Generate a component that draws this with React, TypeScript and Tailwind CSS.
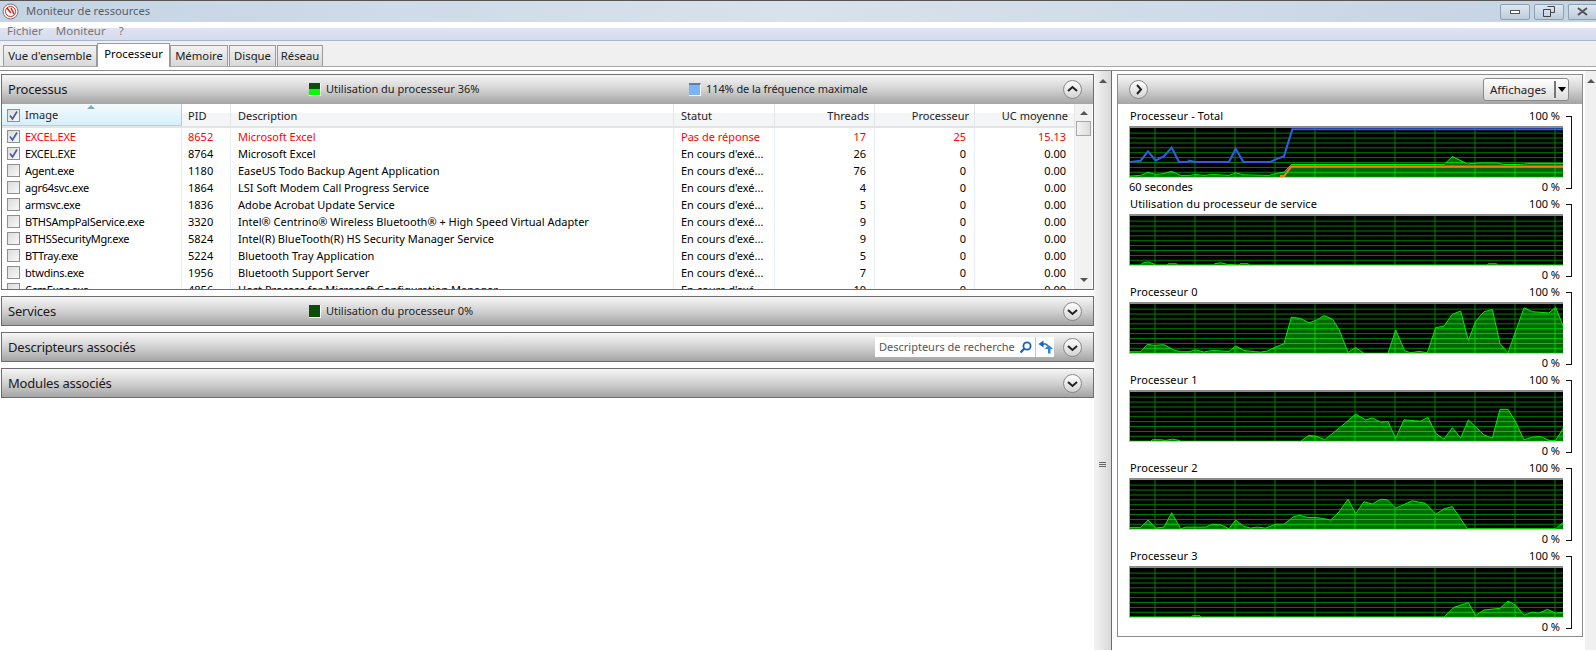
import { useId } from "react";

const FONT = "font-['Noto_Sans','Open_Sans',sans-serif]";
const GRID_COLS = "grid grid-cols-[180px_49px_443px_101px_100px_100px_100px]";

const rows = [
  ["EXCEL.EXE", "8652", "Microsoft Excel", "Pas de réponse", "17", "25", "15.13"],
  ["EXCEL.EXE", "8764", "Microsoft Excel", "En cours d'exé...", "26", "0", "0.00"],
  ["Agent.exe", "1180", "EaseUS Todo Backup Agent Application", "En cours d'exé...", "76", "0", "0.00"],
  ["agr64svc.exe", "1864", "LSI Soft Modem Call Progress Service", "En cours d'exé...", "4", "0", "0.00"],
  ["armsvc.exe", "1836", "Adobe Acrobat Update Service", "En cours d'exé...", "5", "0", "0.00"],
  ["BTHSAmpPalService.exe", "3320", "Intel® Centrino® Wireless Bluetooth® + High Speed Virtual Adapter", "En cours d'exé...", "9", "0", "0.00"],
  ["BTHSSecurityMgr.exe", "5824", "Intel(R) BlueTooth(R) HS Security Manager Service", "En cours d'exé...", "9", "0", "0.00"],
  ["BTTray.exe", "5224", "Bluetooth Tray Application", "En cours d'exé...", "5", "0", "0.00"],
  ["btwdins.exe", "1956", "Bluetooth Support Server", "En cours d'exé...", "7", "0", "0.00"],
  ["CcmExec.exe", "4856", "Host Process for Microsoft Configuration Manager", "En cours d'exé...", "10", "0", "0.00"],
];

// points are read off the 3x crops: x from 88 to 1390, y from the chart top
const serviceLine = "88,196 120,196 125,190 143,186 162,194 165,196 200,196 203,192 228,192 230,196 338,196 342,192 360,189 380,194 415,196 418,192 443,192 445,196 1160,196 1163,192 1188,192 1190,196 1390,196";
const cpu0 = "88,455 120,455 140,432 160,435 190,433 220,450 240,455 265,455 285,449 310,456 335,451 385,454 405,437 430,451 465,455 480,456 500,453 525,440 550,430 572,347 600,351 625,365 650,355 670,342 695,353 715,385 742,457 765,442 790,460 862,460 885,387 912,452 930,458 955,454 980,458 1005,380 1030,375 1055,338 1080,328 1103,420 1125,360 1150,330 1175,323 1198,430 1222,458 1270,318 1295,330 1345,334 1365,316 1390,382";
const cpu1 = "88,725 150,725 155,720 180,720 195,722 215,718 235,722 240,725 600,725 625,706 650,710 672,720 720,680 765,640 795,658 815,652 840,665 862,663 885,715 910,658 945,661 960,662 982,650 1005,700 1030,718 1055,682 1080,715 1103,658 1150,705 1175,715 1198,625 1222,625 1245,665 1270,720 1295,712 1320,710 1345,722 1365,722 1390,680";
const cpu2 = "88,293 120,293 142,270 165,295 190,292 213,247 240,297 255,292 315,292 335,283 360,285 385,297 405,270 430,290 450,295 470,292 495,295 525,283 550,283 578,260 598,255 620,262 650,262 690,270 715,245 742,205 765,250 790,213 815,220 840,205 860,207 885,233 935,210 975,218 1005,252 1030,235 1055,228 1100,297 1365,297 1390,275";
const cpu3 = "88,562 272,562 275,558 298,558 300,562 1030,562 1060,532 1103,517 1125,557 1150,540 1198,535 1222,512 1245,525 1270,556 1295,547 1315,550 1340,538 1365,550 1390,547";
const totalLine = "88,530 120,528 142,518 165,525 190,522 213,515 240,528 265,528 285,525 310,528 335,525 385,528 405,520 430,526 505,528 525,522 550,518 572,494 1030,494 1055,469 1100,492 1140,489 1190,489 1210,494 1260,494 1280,491 1390,491";
const totalOrange = "538,530 550,530 572,500 1390,500";
const totalBlue = "88,486 120,482 142,453 165,481 190,468 213,441 235,486 262,486 265,482 285,486 385,486 405,445 428,486 510,486 525,478 550,468 575,384 1390,384";

const charts = [
  { title: "Processeur - Total", top: 380, line: totalLine, footer: "60 secondes", total: true },
  { title: "Utilisation du processeur de service", top: 43, line: serviceLine },
  { title: "Processeur 0", top: 306, line: cpu0 },
  { title: "Processeur 1", top: 571, line: cpu1 },
  { title: "Processeur 2", top: 145, line: cpu2 },
  { title: "Processeur 3", top: 409, line: cpu3 },
];

function Graph({ top, line, total }: { top: number; line: string; total?: boolean }) {
  const clip = useId();
  const bottom = top + 153;
  const area = `88,${bottom} ${line} 1390,${bottom}`;
  const vs = Array.from({ length: 11 }, (_, i) => 163 + i * 120);
  const hs = Array.from({ length: 10 }, (_, i) => top + 16 + i * 15.3);
  const gridLines = (color: string) => (
    <g stroke={color} strokeWidth={3} shapeRendering="crispEdges">
      {vs.map((x) => (
        <line key={x} x1={x} x2={x} y1={top} y2={bottom} />
      ))}
      {hs.map((y) => (
        <line key={y} x1={87} x2={1392} y1={y} y2={y} />
      ))}
    </g>
  );
  return (
    <div className="h-[52px] w-[434px] border-t-2 border-b border-l border-t-[#8c8c8c] border-b-[#c8c8c8] border-l-[#a8a8a8] bg-black">
      <svg width={433} height={49} viewBox={`88 ${top} 1299 ${bottom - top}`} preserveAspectRatio="none" className="block">
        <defs>
          <clipPath id={clip}>
            <polygon points={area} />
          </clipPath>
        </defs>
        {gridLines("#008200")}
        <polygon points={area} fill="#006a00" />
        <g clipPath={`url(#${clip})`}>{gridLines("#00d000")}</g>
        <polyline points={line} fill="none" stroke="#00f000" strokeWidth={3} />
        {total && <polyline points={totalOrange} fill="none" stroke="#f57c10" strokeWidth={6.4} />}
        {total && <polyline points={totalBlue} fill="none" stroke="#2f5be6" strokeWidth={6.4} />}
      </svg>
    </div>
  );
}

function Box({ checked }: { checked?: boolean }) {
  return (
    <span className="flex h-[13px] w-[13px] shrink-0 items-center justify-center border border-[#8e8f8f] bg-gradient-to-br from-[#dcdcdc] to-[#f8f8f8]">
      {checked && (
        <svg width="11" height="11" viewBox="0 0 11 11">
          <path d="M2 5.5 L4.5 9 L9 1.5" fill="none" stroke="#4a5f97" strokeWidth="1.7" />
        </svg>
      )}
    </span>
  );
}

function RoundButton({ dir }: { dir: "up" | "down" | "right" }) {
  const d = dir === "up" ? "M4 10 L8.5 6 L13 10" : dir === "down" ? "M4 7 L8.5 11 L13 7" : "M7 4 L11 8.5 L7 13";
  return (
    <span className="flex h-[19px] w-[19px] items-center justify-center rounded-full border border-[#8a8a8a] bg-gradient-to-b from-white to-[#d4d4d4]">
      <svg width="17" height="17" viewBox="0 0 17 17">
        <path d={d} fill="none" stroke="#222" strokeWidth="2" />
      </svg>
    </span>
  );
}

function Meter({ color, fill }: { color: string; fill: number }) {
  return (
    <span className="flex h-[13px] w-[12px] flex-col justify-end border-r border-b border-white bg-[#0b4d0b]">
      <span className={`w-full ${color}`} style={{ height: fill }} />
    </span>
  );
}

function PanelHeader({ title, children, dir }: { title: string; children?: React.ReactNode; dir: "up" | "down" }) {
  const collapsed = dir === "down";
  return (
    <div className={`flex ${collapsed ? "h-[28px]" : "h-[29px]"} items-center bg-gradient-to-b from-[#f6f6f6] via-[#d2d2d2] to-[#a4a4a4] pr-[11px] pl-[6px]`}>
      <span className={`w-[301px] text-[13px] tracking-[-0.2px] text-[#1a1a1a] ${collapsed ? "pt-[2px]" : ""}`}>{title}</span>
      <div className="flex flex-1 items-center">{children}</div>
      <RoundButton dir={dir} />
    </div>
  );
}

function ArrowUp() {
  return <span className="h-0 w-0 border-x-[4px] border-b-[4px] border-x-transparent border-b-[#555]" />;
}

function ArrowDown() {
  return <span className="h-0 w-0 border-x-[4px] border-t-[4px] border-x-transparent border-t-[#555]" />;
}

const headerCell = "flex items-center border-r border-[#e4e6e8] px-[6px] pt-[2px] text-[#222]";

function ProcessTable() {
  return (
    <div className="flex h-[185px]">
      <div className="h-full w-[1073px] overflow-hidden">
        <div className={`${GRID_COLS} h-[24px] border-b-2 border-[#e2e4e6] bg-gradient-to-b from-white from-40% to-[#f3f5f7] to-40%`}>
          <div className="relative flex items-center gap-[5px] border-r border-b border-[#9fd5ef] bg-gradient-to-b from-[#f4fbfe] to-[#d7effa] pt-[2px] pl-[5px]">
            <Box checked />
            <span className="text-[#222]">Image</span>
            <span className="absolute top-[1px] left-[85px] h-0 w-0 border-x-[4px] border-b-[4px] border-x-transparent border-b-[#7fa8c0]" />
          </div>
          <div className={headerCell}>PID</div>
          <div className={`${headerCell} pl-[7px]`}>Description</div>
          <div className={`${headerCell} pl-[7px]`}>Statut</div>
          <div className={`${headerCell} justify-end pr-[5px]`}>Threads</div>
          <div className={`${headerCell} justify-end pr-[5px]`}>Processeur</div>
          <div className={`${headerCell} justify-end`}>UC moyenne</div>
        </div>
        {rows.map((r, i) => (
          <div key={i} className={`${GRID_COLS} h-[17px] leading-[17px] ${i === 0 ? "text-[#ff0000]" : "text-black"}`}>
            <div className="flex items-center gap-[5px] border-r border-[#e6eefa] pl-[5px]">
              <Box checked={i < 2} />
              <span className="tracking-[-0.25px]">{r[0]}</span>
            </div>
            <div className="border-r border-[#e6eefa] pl-[6px]">{r[1]}</div>
            <div className="overflow-hidden border-r border-[#e6eefa] pl-[7px] whitespace-nowrap">{r[2]}</div>
            <div className="border-r border-[#e6eefa] pl-[7px]">{r[3]}</div>
            <div className="border-r border-[#e6eefa] pr-[8px] text-right">{r[4]}</div>
            <div className="border-r border-[#e6eefa] pr-[8px] text-right">{r[5]}</div>
            <div className="border-r border-[#e6eefa] pr-[8px] text-right">{r[6]}</div>
          </div>
        ))}
      </div>
      <div className="flex w-[17px] flex-col items-center bg-[#f2f2f2] py-[7px]">
        <ArrowUp />
        <span className="mt-[6px] h-[15px] w-[15px] border border-[#a8a8a8] bg-gradient-to-r from-[#f4f4f4] to-[#dcdcdc]" />
        <span className="flex-1" />
        <ArrowDown />
      </div>
    </div>
  );
}

function LeftColumn() {
  return (
    <div className="flex w-[1094px] flex-col gap-[6px] pt-[3px] pl-[1px]">
      <div className="border border-[#6e6e6e]">
        <PanelHeader title="Processus" dir="up">
          <Meter color="bg-[#00ff00]" fill={6} />
          <span className="ml-[5px] w-[363px] text-[#222]">Utilisation du processeur 36%</span>
          <span className="h-[13px] w-[12px] border-t-2 border-r border-b border-white border-t-[#5b7fae] bg-[#7ab4fa]" />
          <span className="ml-[5px] tracking-[-0.1px] text-[#222]">114% de la fréquence maximale</span>
        </PanelHeader>
        <ProcessTable />
      </div>
      <div className="border border-[#6e6e6e]">
        <PanelHeader title="Services" dir="down">
          <Meter color="bg-[#00ff00]" fill={0} />
          <span className="ml-[5px] text-[#222]">Utilisation du processeur 0%</span>
        </PanelHeader>
      </div>
      <div className="border border-[#6e6e6e]">
        <PanelHeader title="Descripteurs associés" dir="down">
          <div className="mr-[9px] ml-auto flex h-[20px] w-[179px] items-center bg-white pl-[4px] text-[#555]">
            <span className="flex-1">Descripteurs de recherche</span>
            <svg width="13" height="13" viewBox="0 0 13 13" className="mr-[3px]">
              <circle cx="8" cy="5" r="3.6" fill="none" stroke="#1d5fb0" strokeWidth="1.8" />
              <path d="M5.2 7.8 L1.5 11.5" stroke="#1d5fb0" strokeWidth="2.2" />
            </svg>
            <span className="flex h-full w-[19px] items-center justify-center border-l border-[#b8c8d8]">
              <svg width="15" height="14" viewBox="0 0 15 14">
                <path d="M5.5 0.5 L0.5 4 L5.5 7.5 Z" fill="#1f5fb5" />
                <path d="M5 4 H7.5 Q9 4 9.5 6" fill="none" stroke="#1f5fb5" strokeWidth="1.6" />
                <path d="M10 13.5 V9 H6.5 L10.8 5 L15 9 H12.5 V13.5 Z" fill="#2f82dc" />
              </svg>
            </span>
          </div>
        </PanelHeader>
      </div>
      <div className="border border-[#6e6e6e]">
        <PanelHeader title="Modules associés" dir="down" />
      </div>
    </div>
  );
}

function Splitter() {
  return (
    <div className="flex w-[18px] flex-col items-center border-r border-[#6a6a6a] bg-gradient-to-r from-[#f4f4f4] to-[#d8d8d8] pt-[8px]">
      <ArrowUp />
      <span className="mt-[379px] flex flex-col gap-[1px]">
        <span className="h-px w-[7px] bg-[#666]" />
        <span className="h-px w-[7px] bg-[#666]" />
        <span className="h-px w-[7px] bg-[#666]" />
      </span>
    </div>
  );
}

function RightColumn() {
  return (
    <div className="ml-[5px] flex w-[466px] flex-col pt-[3px]">
      <div className="border border-[#8a8a8a] bg-white">
        <div className="flex h-[29px] items-center justify-between bg-gradient-to-b from-[#f6f6f6] via-[#d2d2d2] to-[#a4a4a4] pr-[13px] pl-[11px]">
          <RoundButton dir="right" />
          <div className="flex h-[23px] w-[86px] items-center rounded-[3px] border border-[#8a8a8a] bg-gradient-to-b from-white to-[#dcdcdc] pl-[6px] text-[11.5px] text-[#222]">
            <span className="flex-1">Affichages</span>
            <span className="flex h-[17px] w-[14px] items-center justify-center border-l-2 border-[#777]">
              <span className="h-0 w-0 border-x-[4px] border-t-[5px] border-x-transparent border-t-black" />
            </span>
          </div>
        </div>
        <div className="flex flex-col pt-[4px] pl-[11px]">
          {charts.map((c) => (
            <div key={c.title} className="flex h-[88px]">
              <div className="flex w-[434px] flex-col">
                <div className="flex h-[18px] items-center justify-between px-[1px] pb-[2px] text-black">
                  <span className="tracking-[0.1px]">{c.title}</span>
                  <span className="pr-[2px]">100 %</span>
                </div>
                <Graph top={c.top} line={c.line} total={c.total} />
                <div className="flex h-[18px] items-center justify-between pr-[3px] text-black">
                  <span>{c.footer}</span>
                  <span>0 %</span>
                </div>
              </div>
              <span className="mt-[8px] ml-[3px] h-[73px] w-[6px] border-y border-r border-[#111]" />
            </div>
          ))}
        </div>
      </div>
    </div>
  );
}

const captionButton = "flex h-[16px] items-center justify-center border border-[#8ea0b4] bg-gradient-to-b from-[#dfe8f1] to-[#bccbdb]";

function TitleBar() {
  return (
    <div className="flex h-[22px] items-center border-t border-[#555] bg-gradient-to-r from-[#c4d4e4] via-[#d8e2ec] to-[#c4d3e3] pl-[2px] text-[11.2px] text-[#5a5f66]">
      <svg width="17" height="17" viewBox="0 0 17 17">
        <circle cx="8.5" cy="8.5" r="7.5" fill="#eee" stroke="#777" />
        <circle cx="8.5" cy="8.5" r="5" fill="#fff" stroke="#b33" />
        <path d="M5 5 L9 10 M9 5 L12 11" stroke="#c22" strokeWidth="1.5" />
      </svg>
      <span className="ml-[7px]">Moniteur de ressources</span>
      <div className="ml-auto flex items-center gap-[4px]">
        <span className={`${captionButton} w-[30px] rounded-[2px]`}>
          <span className="h-[4px] w-[10px] border border-[#555] bg-white" />
        </span>
        <span className={`${captionButton} w-[30px] rounded-[2px]`}>
          <svg width="12" height="11" viewBox="0 0 12 11">
            <path d="M4.5 .5 H11.5 V6.5 H8 M.5 3.5 H7.5 V10.5 H.5 Z" fill="none" stroke="#444" />
          </svg>
        </span>
        <span className={`${captionButton} w-[28px] rounded-l-[2px] border-r-0`}>
          <svg width="11" height="9" viewBox="0 0 11 9">
            <path d="M1 1 L10 8 M10 1 L1 8" stroke="#555" strokeWidth="2" />
          </svg>
        </span>
      </div>
    </div>
  );
}

const tabs = [
  { label: "Vue d'ensemble", w: "w-[94px]" },
  { label: "Processeur", w: "w-[73px]", active: true },
  { label: "Mémoire", w: "w-[58px]" },
  { label: "Disque", w: "ml-[1px] w-[47px]" },
  { label: "Réseau", w: "ml-[1px] w-[46px]" },
];

export default function App() {
  return (
    <div className={`${FONT} h-[651px] w-[1596px] overflow-hidden bg-white text-[11px]`}>
      <TitleBar />
      <div className="flex h-[19px] items-center gap-[13px] border-b border-[#a9b5c9] bg-[linear-gradient(#ffffff_6px,#dfe3f2_6px,#d5dcee)] pl-[7px] text-[11.5px] text-[#777]">
        <span>Fichier</span>
        <span>Moniteur</span>
        <span>?</span>
      </div>
      <div className="flex h-[26px] items-end border-b border-[#a8a8a8] bg-[#f0f0f0] pl-[3px]">
        {tabs.map((t) =>
          t.active ? (
            <div key={t.label} className={`${t.w} -mb-px flex h-[24px] items-center justify-center border-x border-t border-[#9a9a9a] bg-white pb-[3px] text-[11.3px] text-black`}>
              {t.label}
            </div>
          ) : (
            <div key={t.label} className={`${t.w} flex h-[21px] items-center justify-center border-x border-t border-[#9a9a9a] bg-gradient-to-b from-[#f2f2f2] to-[#d8d8d8] text-[11.3px] text-[#222]`}>
              {t.label}
            </div>
          ),
        )}
      </div>
      <div className="h-[3px] bg-white" />
      <div className="flex h-[580px] border-t border-[#8a8a8a]">
        <LeftColumn />
        <Splitter />
        <RightColumn />
        <div className="ml-[2px] flex flex-1 justify-center bg-[#f0f0f0] pt-[8px]">
          <ArrowUp />
        </div>
      </div>
    </div>
  );
}
